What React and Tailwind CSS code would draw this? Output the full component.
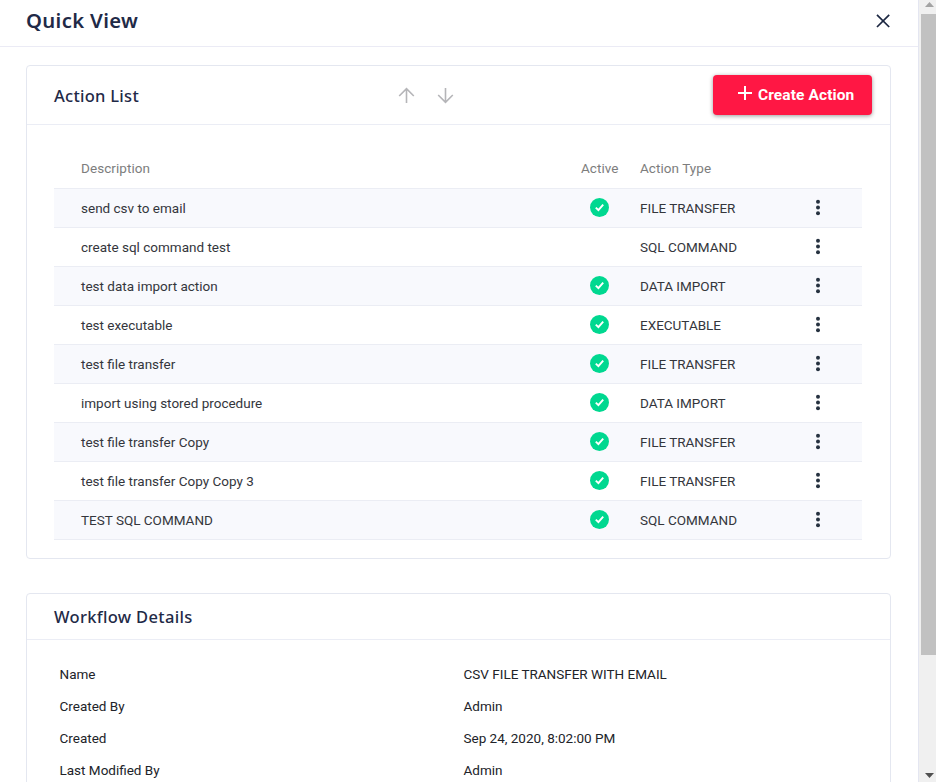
const actions = [
  { description: "send csv to email", active: true, type: "FILE TRANSFER" },
  { description: "create sql command test", active: false, type: "SQL COMMAND" },
  { description: "test data import action", active: true, type: "DATA IMPORT" },
  { description: "test executable", active: true, type: "EXECUTABLE" },
  { description: "test file transfer", active: true, type: "FILE TRANSFER" },
  { description: "import using stored procedure", active: true, type: "DATA IMPORT" },
  { description: "test file transfer Copy", active: true, type: "FILE TRANSFER" },
  { description: "test file transfer Copy Copy 3", active: true, type: "FILE TRANSFER" },
  { description: "TEST SQL COMMAND", active: true, type: "SQL COMMAND" },
];

const details = [
  ["Name", "CSV FILE TRANSFER WITH EMAIL"],
  ["Created By", "Admin"],
  ["Created", "Sep 24, 2020, 8:02:00 PM"],
  ["Last Modified By", "Admin"],
];

function ActiveIcon() {
  return (
    <svg width="19" height="19" viewBox="0 0 19 19" className="block">
      <circle cx="9.5" cy="9.5" r="9.5" fill="#00d890" />
      <path d="M5.8 9.6L8.4 12.2L13.2 6.6" fill="none" stroke="#fff" strokeWidth="1.9" />
    </svg>
  );
}

function MoreIcon() {
  return (
    <svg width="6" height="17" viewBox="0 0 6 17" className="block" fill="#263240">
      <circle cx="3" cy="2.7" r="2" />
      <circle cx="3" cy="8.5" r="2" />
      <circle cx="3" cy="14.3" r="2" />
    </svg>
  );
}

function ArrowIcon({ className = "" }) {
  return (
    <svg width="17" height="17" viewBox="0 0 17 17" className={className} fill="none" stroke="#b5b5b8" strokeWidth="1.6">
      <path d="M8.5 16V2M1.2 9L8.5 1.7L15.8 9" />
    </svg>
  );
}

function ActionRow({ action }) {
  return (
    <div className="grid h-[39px] grid-cols-[27px_499px_60px_157px_1fr] items-center border-b border-[#ebedf4] odd:bg-[#f8f9fd]">
      <span />
      <span>{action.description}</span>
      <span className="pb-[1px] pl-[10px]">{action.active && <ActiveIcon />}</span>
      <span>{action.type}</span>
      <span className="pb-[1px] pl-[18px]"><MoreIcon /></span>
    </div>
  );
}

function Scrollbar() {
  return (
    <div className="flex w-[18px] shrink-0 flex-col border-l border-[#e4e6f1] bg-[#f0f0f0] pl-[2px]">
      <div className="flex h-[14px] justify-center pt-[2px] pl-[2px]">
        <svg width="9" height="5" viewBox="0 0 9 5"><path d="M0 5L4.5 0L9 5Z" fill="#a3a3a3" /></svg>
      </div>
      <div className="h-[641px] bg-[#c1c1c1]" />
      <div className="mt-auto flex justify-center pb-[4px] pl-[2px]">
        <svg width="9" height="5" viewBox="0 0 9 5"><path d="M0 0L4.5 5L9 0Z" fill="#505050" /></svg>
      </div>
    </div>
  );
}

export default function App() {
  return (
    <div className="flex h-[782px] w-[936px] overflow-hidden bg-white font-['Roboto',sans-serif] text-[13.5px] text-[#212329]">
      <main className="min-w-0 flex-1 overflow-hidden">
        <header className="flex h-[47px] items-center justify-between border-b border-[#ebebf5] pr-[28px] pb-[5px] pl-[26px]">
          <h1 className="pb-[2px] font-['Noto_Sans',sans-serif] text-[20.3px] leading-[30px] font-semibold tracking-[0.33px] text-[#1f2a47]">Quick View</h1>
          <svg width="14" height="14" viewBox="0 0 14 14" fill="none" stroke="#1c2742" strokeWidth="1.7">
            <path d="M1 0.8L13.2 13M13.2 0.8L1 13" />
          </svg>
        </header>

        <section className="mt-[18px] ml-[26px] h-[494px] w-[865px] rounded-[4px] border border-[#e4e7f0]">
          <div className="flex h-[59px] items-center border-b border-[#ebedf5] pr-[18px] pl-[27px]">
            <h2 className="w-[344px] pt-[2px] font-['Noto_Sans',sans-serif] text-[16.5px] leading-[24px] font-medium tracking-[0.27px] text-[#1f2a47]">Action List</h2>
            <div className="flex gap-[22px]">
              <ArrowIcon />
              <ArrowIcon className="rotate-180" />
            </div>
            <button className="ml-auto flex h-[40px] w-[159px] items-center rounded-[4px] bg-[#ff1744] pl-[25px] text-[15.5px] font-bold tracking-[0.1px] text-white shadow-[0_1px_4px_rgba(0,0,0,0.4)]">
              <svg width="14" height="14" viewBox="0 0 14 14" className="mr-[6px] mb-[5px]" stroke="#fff" strokeWidth="2">
                <path d="M7 0V14M0 7H14" />
              </svg>
              <span className="pt-[1px]">Create Action</span>
            </button>
          </div>

          <div className="mr-[28px] ml-[27px]">
            <div className="grid h-[64px] grid-cols-[27px_500px_59px_1fr] items-end border-b border-[#ebedf4] pb-[10px] tracking-[0.06px] text-[#7d7d7d]">
              <span />
              <span>Description</span>
              <span>Active</span>
              <span>Action Type</span>
            </div>
            <div className="text-[#34363c]">
              {actions.map((action) => (
                <ActionRow key={action.description} action={action} />
              ))}
            </div>
          </div>
        </section>

        <section className="mt-[34px] ml-[26px] h-[300px] w-[865px] rounded-[4px] border border-[#e4e7f0]">
          <div className="flex h-[46px] items-center border-b border-[#ebedf5] pl-[27px]">
            <h2 className="pt-[1px] font-['Noto_Sans',sans-serif] text-[16.5px] leading-[24px] font-medium tracking-[0.32px] text-[#1f2a47]">Workflow Details</h2>
          </div>
          <dl className="pt-[18px] pl-[32.5px]">
            {details.map(([label, value]) => (
              <div key={label} className="grid h-8 grid-cols-[404px_1fr] items-center">
                <dt>{label}</dt>
                <dd>{value}</dd>
              </div>
            ))}
          </dl>
        </section>
      </main>
      <Scrollbar />
    </div>
  );
}
